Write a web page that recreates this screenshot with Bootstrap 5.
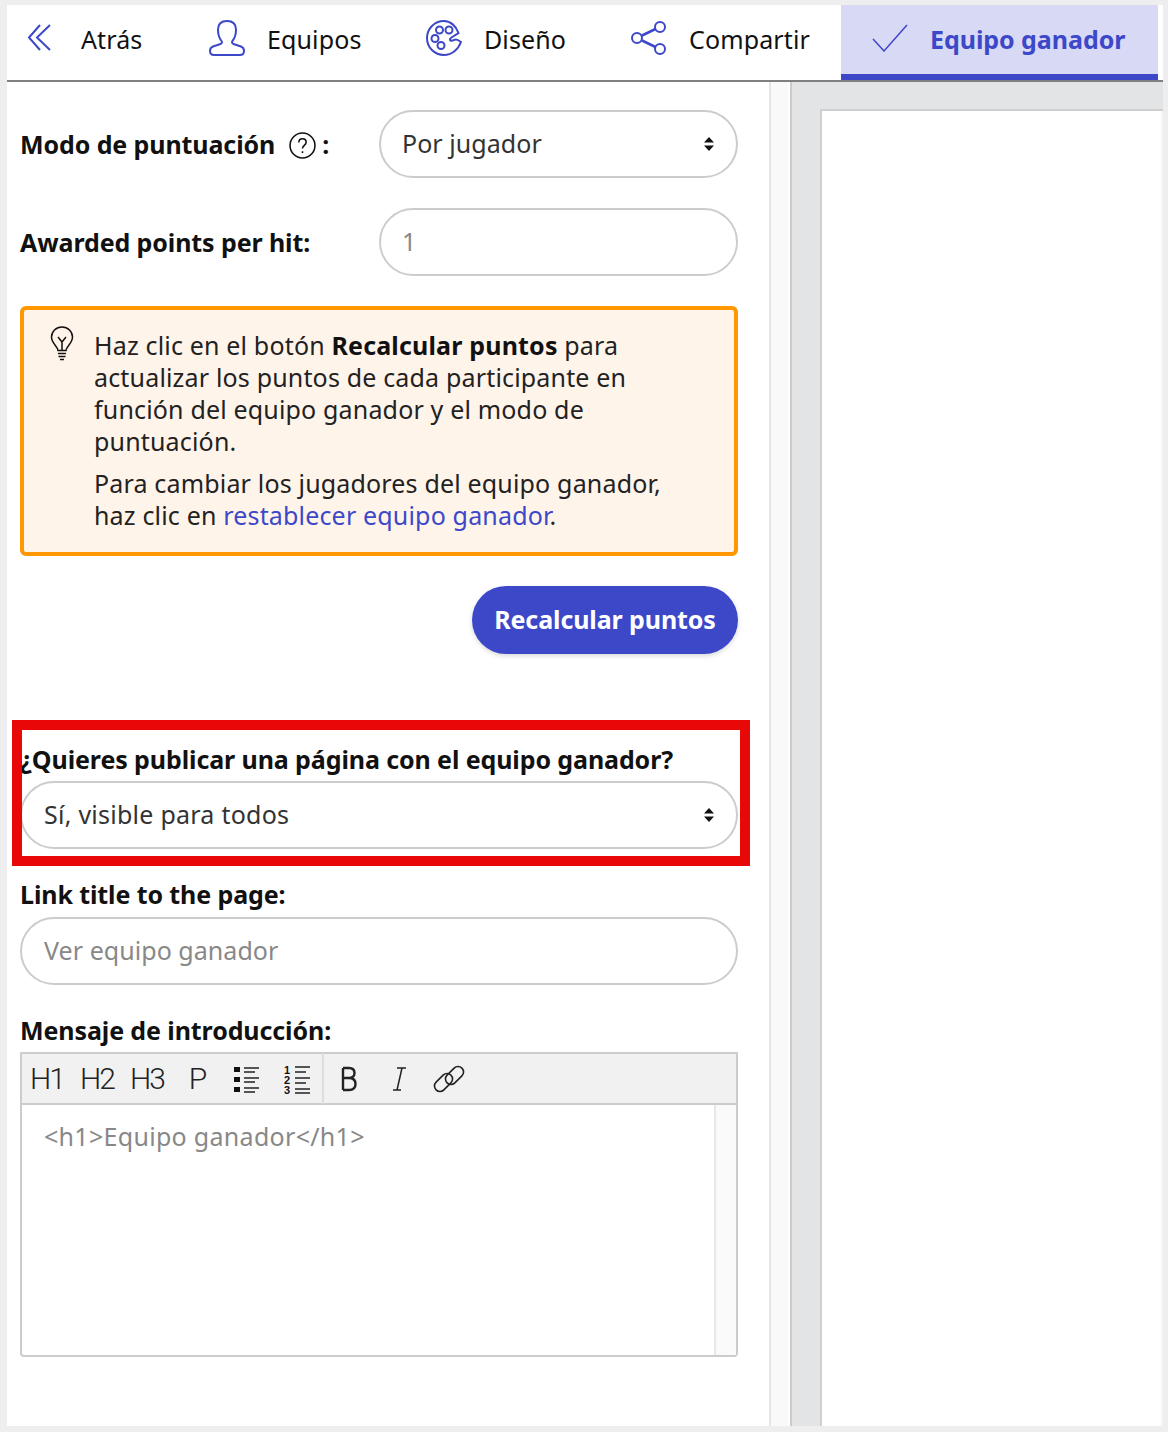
<!DOCTYPE html>
<html lang="es"><head><meta charset="utf-8"><title>Equipo ganador</title>
<link href="https://cdn.jsdelivr.net/npm/bootstrap@5.3.0/dist/css/bootstrap.min.css" rel="stylesheet">
<style>
html,body{height:1432px;overflow:hidden}
body{background:#eee;padding:5px 5px 6px 7px;font-family:"Noto Sans","Open Sans",sans-serif;font-size:25px;line-height:32px;color:#111;letter-spacing:-.1px}
.shell{height:1421px;background:#fff;display:flex;flex-direction:column;position:relative}
.topbar{height:77px;flex:none;border-bottom:2px solid #808080;display:flex;padding-left:20px}
.tab{display:flex;align-items:center;height:75px;padding-bottom:8px;color:#111;letter-spacing:.12px}
.tab svg{flex:none;fill:none;stroke:#3d48c9;stroke-width:2;margin-top:-2px}
.tab-back{width:182px}.tab-back svg{margin-right:29px}
.tab-team{width:217px}.tab-team svg{margin-right:22px}
.tab-design{width:205px}.tab-design svg{margin-right:22px}
.tab-share{width:210px}.tab-share svg{margin-right:22px}
.tab-win{width:317px;background:#d8d9f4;border-bottom:6px solid #3d48c9;color:#3d48c9;font-weight:700;padding:0 0 2px 31px;letter-spacing:-.05px}
.tab-win svg{margin-right:22px}
.workarea{flex:1;display:flex;min-height:0}
.sidepanel{width:762px;flex:none;padding:28px 31px 0 13px}
.vbar{width:21px;flex:none;background:#f9f9f9;border-left:2px solid #e6e6e6;border-right:2px solid #fff}
.stage{flex:1;background:#e3e4e6;border-left:2px solid #ccc;padding:27px 0 0 28px}
.sheet{height:100%;background:#fff;border-left:2px solid #cfcfcf;border-top:2px solid #cfcfcf;box-shadow:inset -3px 0 3px -1px #f3f3f3}
.lbl{font-weight:700;margin:0;color:#111}
.rowline{display:flex;align-items:center;height:68px;margin-bottom:30px}
.rowline .lbl{width:359px;flex:none}
.help{margin:0 6px 0 14px;vertical-align:-5px}
.pill{height:68px;border:2px solid #ccc;border-radius:34px;font-size:25px;line-height:32px;padding:0 21px 2px;color:#333;box-shadow:none;letter-spacing:.05px}
.pill::placeholder{color:#888;opacity:1}
select.pill{color:#333;background-size:12px 16px;background-position:right 21px center;background-image:url("data:image/svg+xml,%3Csvg xmlns='http://www.w3.org/2000/svg' viewBox='0 0 12 16'%3E%3Cpath d='M6 1l5 5.500H1zM6 15l-5-5.500h10z' fill='%23111'/%3E%3C/svg%3E")}
.tip{border:4px solid #ff9800;border-radius:6px;background:#fff4ea;height:250px;margin:0;padding:19px 55px 0 70px;position:relative;color:#222;letter-spacing:.17px}
.tip svg{position:absolute;left:26px;top:16px}
.tip p{margin:0 0 10px}
.tip a{color:#3d48c9;text-decoration:none}
.tip b{color:#111}
.recalc{height:68px;width:266px;border-radius:34px;background:#3d48c9;border:0;font-size:25px;font-weight:700;color:#fff;padding:0;box-shadow:0 2px 5px rgba(0,0,0,.15);letter-spacing:-.1px}
.actions{display:flex;justify-content:flex-end;margin:30px 0 0}
.stack{margin-top:89px}
.lbl-block{display:block;height:32px;line-height:32px}
.stack .pill{width:100%;padding-left:22px}
.stack .pub-select{margin-top:6px;letter-spacing:.25px}
.stack .page-title{margin-top:7px}
.gap-a{margin-top:29px}
.gap-b{margin-top:29px}
.editor{border:2px solid #ccc;border-radius:0 0 4px 4px;height:305px;margin-top:6px;display:flex;flex-direction:column}
.tools{height:51px;flex:none;background:#f1f1f1;border-bottom:2px solid #ccc;display:flex;align-items:center}
.tool{width:50px;font-weight:300;font-size:30px;color:#222;flex:none;letter-spacing:-2px;font-family:Roboto,"Liberation Sans",sans-serif;display:flex;justify-content:center;align-items:center}
.tool svg{fill:none;stroke:#222;stroke-width:1.600}
.tsep{width:2px;height:51px;background:#ddd;flex:none}
.edbody{flex:1;display:flex;min-height:0}
.edtext{flex:1;padding:15px 22px;color:#888;line-height:32px;letter-spacing:.3px}
.edbar{width:22px;flex:none;background:#fafafa;border-left:2px solid #e8e8e8}
.redbox{position:absolute;left:5px;top:715px;width:738px;height:146px;border:10px solid #e80808;pointer-events:none}
</style></head><body>
<div class="shell">
 <nav class="topbar">
  <a class="tab tab-back text-decoration-none" href="#"><svg width="25" height="28" viewBox="0 0 25 28"><path d="M13 1 2 13.500 13 26M23 1 10 13.500 23 26"/></svg>Atrás</a>
  <a class="tab tab-team text-decoration-none" href="#"><svg width="36" height="36" viewBox="0 0 36 36"><path d="M18 1c-6 0-9 3.500-9 8.500 0 5 1.500 9 3.500 11.500 1 1.200.5 2.500-1 3L4 26.500C2 27.300 1 29 1 31c0 2.500 1 4 4 4h26c3 0 4-1.500 4-4 0-2-1-3.700-3-4.500L24.500 24c-1.500-.5-2-1.800-1-3 2-2.500 3.500-6.500 3.500-11.500C27 4.500 24 1 18 1z"/></svg>Equipos</a>
  <a class="tab tab-design text-decoration-none" href="#"><svg width="36" height="36" viewBox="0 0 36 36"><path d="M35 22c-2-1.500-4-3-5.500-2.500-2 .5-3 2-5 1-1-.5-.5-2 1-3l7-4.500C30 6 24.500 1 18 1 8.500 1 1 8.500 1 18s7.500 17 17 17c7.500 0 14-5 17-13z"/><circle cx="13.500" cy="10" r="3.500"/><circle cx="23" cy="10" r="3.500"/><circle cx="9" cy="18.500" r="3.500"/><circle cx="15" cy="25.500" r="3.500"/></svg>Diseño</a>
  <a class="tab tab-share text-decoration-none" href="#"><svg width="36" height="36" viewBox="0 0 36 36"><circle cx="29" cy="7" r="5"/><circle cx="29" cy="29" r="5"/><circle cx="6" cy="18" r="5"/><path d="m11 15.500 13.500-6.500M11 20.500l13.500 6.500" stroke-width="2.500"/></svg>Compartir</a>
  <a class="tab tab-win text-decoration-none" href="#"><svg width="36" height="28" viewBox="0 0 36 28"><path d="m1 15 11 12L35 1" stroke-width="1.500"/></svg>Equipo ganador</a>
 </nav>
 <div class="workarea">
  <div class="sidepanel">
   <div class="rowline"><label class="lbl">Modo de puntuación<svg class="help" width="27" height="27" viewBox="0 0 26 26" fill="none" stroke="#111" stroke-width="1.500"><circle cx="13" cy="13" r="12"/><path d="M9.500 10c0-2 1.500-3.500 3.500-3.500s3.500 1.300 3.500 3.300c0 3-3.500 3-3.500 6"/><path d="M13 18.500v1.800"/></svg>:</label>
    <select class="form-select pill"><option>Por jugador</option></select></div>
   <div class="rowline"><label class="lbl">Awarded points per hit:</label>
    <input class="form-control pill" placeholder="1"></div>
   <div class="tip">
    <svg width="24" height="35" viewBox="0 0 24 35" fill="none" stroke="#111" stroke-width="1.500"><path d="M8 24.500c0-4-6.500-7-6.500-13.500C1.500 5.500 6 1 12 1s10.500 4.500 10.500 10c0 6.500-6.500 9.500-6.500 13.500zM8 11l4 5 4-5M12 16v8M8 27.500h8M8.500 30.500h7M10 33.500h4"/></svg>
    <p>Haz clic en el botón <b>Recalcular puntos</b> para actualizar los puntos de cada participante en función del equipo ganador y el modo de puntuación.</p>
    <p>Para cambiar los jugadores del equipo ganador, haz clic en <a href="#">restablecer equipo ganador</a>.</p>
   </div>
   <div class="actions"><button class="btn recalc" type="button">Recalcular puntos</button></div>
   <div class="stack">
    <label class="lbl lbl-block">¿Quieres publicar una página con el equipo ganador?</label>
    <select class="form-select pill pub-select"><option>Sí, visible para todos</option></select>
    <div class="gap-a"><label class="lbl lbl-block">Link title to the page:</label></div>
    <input class="form-control pill page-title" placeholder="Ver equipo ganador">
    <div class="gap-b"><label class="lbl lbl-block">Mensaje de introducción:</label></div>
    <div class="editor">
     <div class="tools">
      <span class="tool">H1</span><span class="tool">H2</span><span class="tool">H3</span><span class="tool">P</span>
      <span class="tool"><svg width="26" height="28" viewBox="0 0 26 28"><path d="M0 2h6v5H0zM0 12h6v5H0zM0 22h6v5H0z" fill="#111" stroke="none"/><path d="M10 3h15M10 7h11M10 13h15M10 17h11M10 23h15M10 27h11"/></svg></span>
      <span class="tool"><svg width="27" height="30" viewBox="0 0 27 30"><text x="0" y="9.500" font-size="11" font-family="Liberation Sans" font-weight="700" fill="#111" stroke="none">1</text><text x="0" y="19.500" font-size="11" font-family="Liberation Sans" font-weight="700" fill="#111" stroke="none">2</text><text x="0" y="29.500" font-size="11" font-family="Liberation Sans" font-weight="700" fill="#111" stroke="none">3</text><path d="M11 3h15M11 8h11M11 14h15M11 19h11M11 25h15M11 29h15"/></svg></span>
      <span class="tsep"></span>
      <span class="tool"><svg width="16" height="26" viewBox="0 0 16 26"><path d="M2 2v22M2 2h6c3.500 0 5.500 2 5.500 5s-2 5-5.500 5H2M8 12c4 0 6.500 2.300 6.500 6S12 24 8 24H2" stroke-width="2.400"/></svg></span>
      <span class="tool"><svg width="14" height="26" viewBox="0 0 14 26"><path d="M5 2h9M1 24h8M10 2 5 24" stroke-width="1.500"/></svg></span>
      <span class="tool"><svg width="32" height="32" viewBox="0 0 32 32"><rect x="11" y="7" width="21" height="11" rx="5.500" transform="rotate(-45 21.500 12.500)"/><rect x="0" y="14" width="21" height="11" rx="5.500" transform="rotate(-45 10.500 19.500)"/></svg></span>
     </div>
     <div class="edbody"><div class="edtext">&lt;h1&gt;Equipo ganador&lt;/h1&gt;</div><div class="edbar"></div></div>
    </div>
   </div>
  </div>
  <div class="vbar"></div>
  <div class="stage"><div class="sheet"></div></div>
 </div>
 <div class="redbox"></div>
</div>
<script src="https://cdn.jsdelivr.net/npm/bootstrap@5.3.0/dist/js/bootstrap.bundle.min.js"></script>
</body></html>
